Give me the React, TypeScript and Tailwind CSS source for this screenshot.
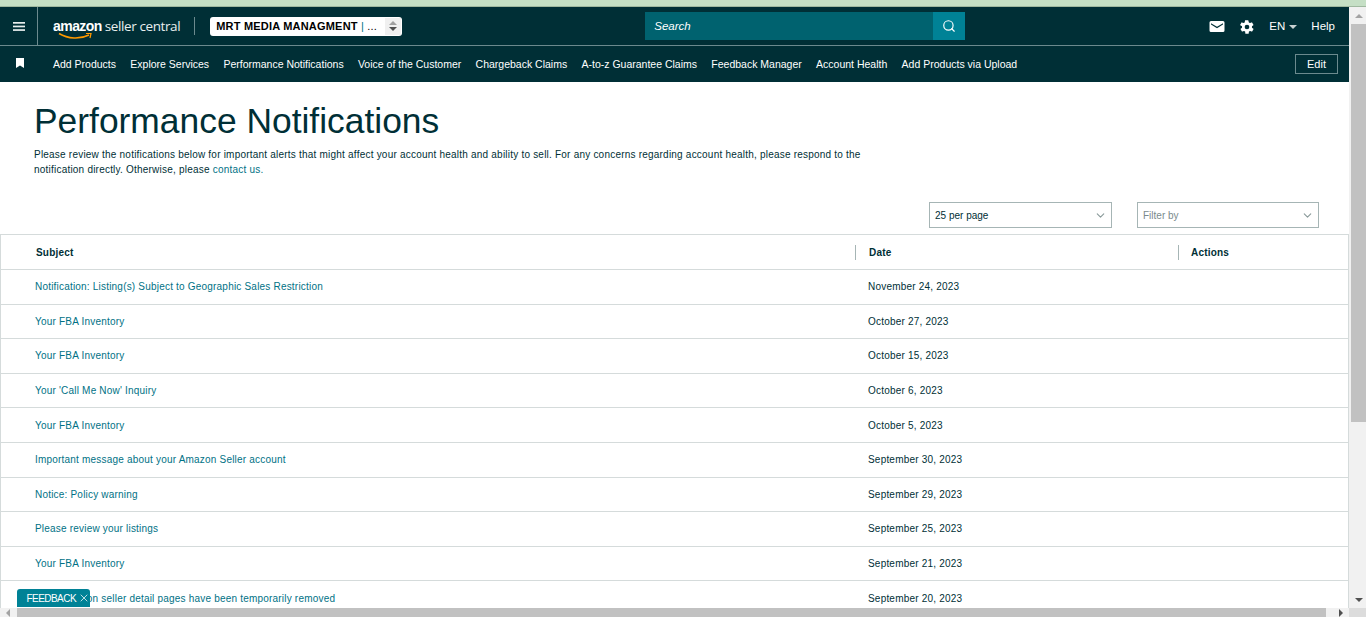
import * as React from 'react';
import { ChevronDown, Search, X } from 'lucide-react';

const navLinks = [
  'Add Products',
  'Explore Services',
  'Performance Notifications',
  'Voice of the Customer',
  'Chargeback Claims',
  'A-to-z Guarantee Claims',
  'Feedback Manager',
  'Account Health',
  'Add Products via Upload',
];

const rows = [
  { subject: 'Notification: Listing(s) Subject to Geographic Sales Restriction', date: 'November 24, 2023' },
  { subject: 'Your FBA Inventory', date: 'October 27, 2023' },
  { subject: 'Your FBA Inventory', date: 'October 15, 2023' },
  { subject: "Your 'Call Me Now' Inquiry", date: 'October 6, 2023' },
  { subject: 'Your FBA Inventory', date: 'October 5, 2023' },
  { subject: 'Important message about your Amazon Seller account', date: 'September 30, 2023' },
  { subject: 'Notice: Policy warning', date: 'September 29, 2023' },
  { subject: 'Please review your listings', date: 'September 25, 2023' },
  { subject: 'Your FBA Inventory', date: 'September 21, 2023' },
  { subject: 'Your items on seller detail pages have been temporarily removed', date: 'September 20, 2023' },
];

function TopBar() {
  return (
    <div className="bg-[#002f36] text-white">
      <div className="flex h-[39px] items-center border-b border-[#6c8a8e]">
        <div className="flex h-full w-[38px] items-center justify-center border-r border-[#6c8a8e]">
          <svg width="12" height="9" viewBox="0 0 12 9" fill="#e8eeee">
            <rect width="12" height="1.700" />
            <rect y="3.600" width="12" height="1.700" />
            <rect y="7.200" width="12" height="1.700" />
          </svg>
        </div>
        <div className="relative ml-[15px] flex items-baseline whitespace-nowrap leading-none">
          <span className="text-[14px] font-bold tracking-[-0.55px]">amazon</span>
          <span className="ml-[3px] font-['Open_Sans',sans-serif] text-[13.500px] tracking-[-0.4px] text-[#e8eeee]">seller central</span>
          <svg className="absolute left-[5px] top-[13px]" width="36" height="9" viewBox="0 0 36 9" fill="none">
            <path d="M1 1.500C10 7 22 7.500 31 3" stroke="#ff9900" strokeWidth="1.500" />
            <path d="M28 1.500L33 1.500L32 6" stroke="#ff9900" strokeWidth="1.200" />
          </svg>
        </div>
        <div className="ml-[14px] h-[18px] w-px bg-[#6c8a8e]" />
        <div className="ml-[15px] flex h-[19px] w-[192px] shrink-0 items-center justify-between rounded-[3px] bg-white pl-[6px] pr-[1px] text-[11px] font-bold tracking-[0.2px] text-black">
          <span className="whitespace-nowrap">MRT MEDIA MANAGMENT <span className="font-normal text-[#007185]">|</span> <span className="font-normal">...</span></span>
          <span className="flex h-[17px] w-[16px] shrink-0 flex-col items-center justify-center gap-[2px] bg-[#f0f0f0]">
            <span className="h-0 w-0 border-x-[4px] border-b-[4px] border-x-transparent border-b-[#a0a0a0]" />
            <span className="h-0 w-0 border-x-[4px] border-t-[4px] border-x-transparent border-t-[#505050]" />
          </span>
        </div>
        <div className="ml-[243px] flex h-[28px] w-[320px] shrink-0">
          <div className="flex flex-1 items-center bg-[#00626f] pl-[9px] pt-[1px] text-[11.500px] italic text-white">Search</div>
          <div className="flex w-[32px] items-center justify-center bg-[#008296]">
            <Search size={14} strokeWidth={2} />
          </div>
        </div>
        <div className="ml-auto flex items-center pr-[14px] pt-[1px] text-[11.500px]">
          <svg width="16" height="13" viewBox="0 0 16 13" className="mr-[14px]">
            <path fill="#fff" fillRule="evenodd" d="M2 1h12a1.500 1.500 0 0 1 1.500 1.500v8A1.500 1.500 0 0 1 14 12H2a1.500 1.500 0 0 1-1.500-1.500v-8A1.500 1.500 0 0 1 2 1zm0 2.200v1.400l6 3.700 6-3.700V3.200L8 6.800z" />
          </svg>
          <svg width="16" height="16" viewBox="0 0 24 24" className="mr-[14px]">
            <path fill="#fff" d="M19.400 13c.1-.3.1-.7.1-1s0-.7-.1-1l2.100-1.600c.2-.2.2-.4.100-.6l-2-3.500c-.1-.2-.4-.3-.6-.2l-2.500 1c-.5-.4-1.100-.7-1.700-1L14 2.400c0-.2-.2-.4-.5-.4h-4c-.3 0-.5.2-.5.400l-.4 2.700c-.6.200-1.200.6-1.700 1l-2.500-1c-.2-.1-.5 0-.6.200l-2 3.500c-.1.200-.1.400.1.600L4.600 11c-.1.300-.1.700-.1 1s0 .7.100 1l-2.100 1.600c-.2.200-.2.400-.1.600l2 3.500c.1.200.4.300.6.200l2.500-1c.5.400 1.100.7 1.700 1l.3 2.700c0 .2.200.4.500.4h4c.3 0 .5-.2.500-.4l.4-2.700c.6-.3 1.200-.6 1.700-1l2.500 1c.2.100.5 0 .6-.2l2-3.500c.1-.2.100-.4-.1-.6zM12 15.500a3.500 3.500 0 1 1 0-7 3.500 3.500 0 0 1 0 7z" />
          </svg>
          <span>EN</span>
          <span className="ml-[4px] mr-[14px] h-0 w-0 border-x-[4px] border-t-[4px] border-x-transparent border-t-[#c8d2d2]" />
          <span>Help</span>
        </div>
      </div>
      <div className="flex h-[36px] items-center">
        <svg width="8" height="10" viewBox="0 0 8 10" className="ml-[16px] mb-[2px]">
          <path fill="#fff" d="M0 0h8v10L4 7.500 0 10z" />
        </svg>
        <div className="ml-[29px] flex gap-[14.300px] pt-[2px] text-[10.500px]">
          {navLinks.map((link) => (
            <span key={link} className="whitespace-nowrap">{link}</span>
          ))}
        </div>
        <div className="ml-auto mr-[11px] flex h-[20px] w-[43px] items-center justify-center border border-[#6c8a8e] text-[11px]">Edit</div>
      </div>
    </div>
  );
}

function Dropdown({ label, className }: { label: string; className: string }) {
  return (
    <div className={`flex h-[26px] items-center justify-between border border-[#a6b5b5] pl-[5px] pr-[4px] text-[10px] ${className}`}>
      <span>{label}</span>
      <ChevronDown size={13} className="text-[#8a9a9a]" />
    </div>
  );
}

function NotificationsTable() {
  return (
    <div className="mt-[6px] border-y border-l border-r border-[#d5dbdb] text-[10px] tracking-[0.2px]">
      <div className="flex h-[35px] items-center border-b border-[#d5dbdb] font-bold text-[#002f36]">
        <div className="w-[854px] pl-[35px]">Subject</div>
        <div className="h-[15px] w-px bg-[#a6b5b5]" />
        <div className="w-[322px] pl-[13px]">Date</div>
        <div className="h-[15px] w-px bg-[#a6b5b5]" />
        <div className="pl-[12px]">Actions</div>
      </div>
      {rows.map((row, i) => (
        <div key={i} className="flex h-[34.600px] items-center border-b border-[#d5dbdb]">
          <div className="w-[867px] pl-[34px] text-[#007185]">{row.subject}</div>
          <div className="text-[#002f36]">{row.date}</div>
        </div>
      ))}
    </div>
  );
}

export default function App() {
  return (
    <div className="relative flex h-[617px] w-[1366px] flex-col overflow-hidden bg-white font-['Liberation_Sans',Arial,sans-serif] text-[#002f36]">
      <div className="h-[7px] shrink-0 border-b border-[#9fb89f] bg-[#c5dfc5]" />
      <div className="flex min-h-0 flex-1">
        <div className="min-w-0 flex-1 overflow-hidden">
          <TopBar />
          <div className="px-[34px] pt-[19px]">
            <h1 className="text-[35.400px] leading-[41px]">Performance Notifications</h1>
            <p className="mt-[6px] w-[840px] text-[10px] leading-[14.500px] tracking-[0.215px]">
              Please review the notifications below for important alerts that might affect your account health and ability to sell. For any concerns regarding account health, please respond to the notification directly. Otherwise, please <span className="text-[#007185]">contact us.</span>
            </p>
          </div>
          <div className="mt-[25px] flex justify-end pr-[30px]">
            <Dropdown label="25 per page" className="w-[183px]" />
            <Dropdown label="Filter by" className="ml-[25px] w-[182px] text-[#7a8a8c]" />
          </div>
          <NotificationsTable />
        </div>
        <div className="flex w-[17px] shrink-0 flex-col items-center bg-[#f1f1f1] pl-[2px]">
          <div className="flex h-[17px] items-center justify-center">
            <span className="h-0 w-0 border-x-[4px] border-b-[4px] border-x-transparent border-b-[#a3a3a3]" />
          </div>
          <div className="h-[398px] w-full bg-[#c1c1c1]" />
          <div className="mt-auto flex h-[17px] items-center justify-center">
            <span className="h-0 w-0 border-x-[4px] border-t-[4px] border-x-transparent border-t-[#505050]" />
          </div>
        </div>
      </div>
      <div className="flex h-[9px] shrink-0 items-center bg-[#f1f1f1]">
        <span className="ml-[6px] h-0 w-0 border-y-[4px] border-r-[4px] border-y-transparent border-r-[#a3a3a3]" />
        <div className="ml-[7px] h-full w-[1309px] bg-[#c1c1c1]" />
        <span className="ml-[13px] h-0 w-0 border-y-[4px] border-l-[4px] border-y-transparent border-l-[#505050]" />
        <div className="ml-auto h-full w-[17px] bg-[#dcdcdc]" />
      </div>
      <div className="absolute bottom-[10px] left-[17px] flex h-[18px] w-[73px] items-center rounded-t-[3px] bg-[#008296] pl-[9.500px] text-[10px] tracking-[-0.55px] text-white">
        FEEDBACK
        <X size={12} strokeWidth={1.500} className="ml-[2px]" />
      </div>
    </div>
  );
}
